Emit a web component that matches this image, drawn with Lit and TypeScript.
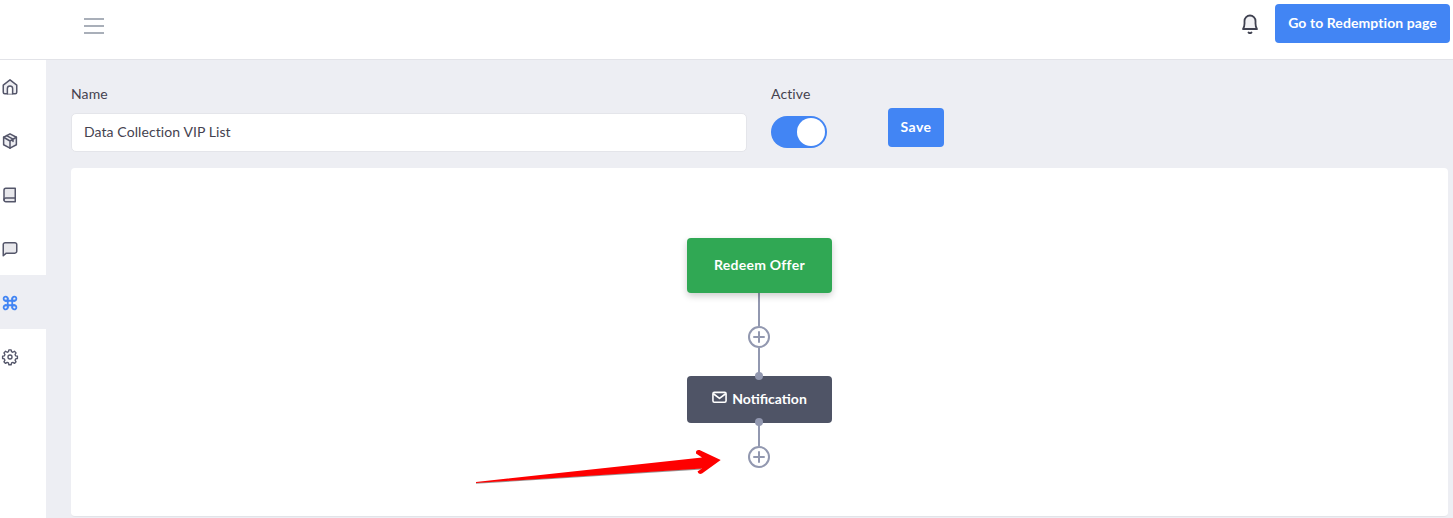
import { LitElement, html, css, svg } from "lit";
import { customElement } from "lit/decorators.js";

const navIcons = [
  svg`<path d="M12 2.500 21 9.500V19a2 2 0 0 1-2 2H5a2 2 0 0 1-2-2V9.500z" fill="#eeeef2"/><path d="M8.500 21v-7a3.500 3.500 0 0 1 7 0v7" fill="#fff"/>`,
  svg`<path d="M12 2.500 20.500 7v10L12 21.500 3.500 17V7z" fill="#eeeef2"/><path d="M3.500 7 12 12l8.500-5M12 12v9.500M7.500 4.800 16 9.500v3"/>`,
  svg`<path d="M6.500 3H19v18H6.500A2.500 2.500 0 0 1 4 18.500v-13A2.500 2.500 0 0 1 6.500 3z" fill="#e8e8ec"/><path d="M4 18.500A2.500 2.500 0 0 1 6.500 16H19"/>`,
  svg`<path d="M3 21V6a2.500 2.500 0 0 1 2.500-2.500h13A2.500 2.500 0 0 1 21 6v9a2.500 2.500 0 0 1-2.500 2.500H7z" fill="#e8e8ec"/>`,
  svg`<path d="M9 6v12M15 6v12M6 9h12M6 15h12" stroke-width="2.400"/><path stroke-width="2.400" d="M9 9H6.500A2.750 2.750 0 1 1 9 6.500M15 9V6.500A2.750 2.750 0 1 1 17.500 9M15 15h2.500A2.750 2.750 0 1 1 15 17.500M9 15v2.500A2.750 2.750 0 1 1 6.500 15" />`,
  svg`<g transform="translate(1.200 1.200) scale(.9)"><circle cx="12" cy="12" r="3"/><path d="M10.300 1.500h3.400l.6 2.700 1.900.8 2.400-1.500 2.400 2.400-1.500 2.400.8 1.900 2.700.6v3.400l-2.700.6-.8 1.900 1.500 2.400-2.400 2.400-2.400-1.500-1.900.8-.6 2.700h-3.400l-.6-2.700-1.900-.8-2.400 1.500-2.400-2.400 1.500-2.400-.8-1.900-2.700-.6v-3.400l2.700-.6.8-1.900-1.500-2.400 2.400-2.400 2.400 1.500 1.900-.8z"/></g>`,
];

@customElement("app-root")
export class AppRoot extends LitElement {
  static styles = css`
    :host {
      display: block;
      width: 1453px;
      height: 518px;
      overflow: hidden;
      position: relative;
      background: #edeef3;
      font-family: "Lato", "Noto Sans", sans-serif;
      color: #4a4a5a;
    }
    .top {
      height: 59px;
      background: #fff;
      border-bottom: 1px solid #e2e3e8;
      display: flex;
      align-items: flex-start;
      justify-content: space-between;
      box-sizing: content-box;
    }
    .burger {
      margin: 18px 0 0 84px;
      width: 20px;
      display: flex;
      flex-direction: column;
      gap: 5px;
    }
    .burger i {
      display: block;
      height: 2px;
      background: #a9afb9;
    }
    .top-right {
      display: flex;
      align-items: flex-start;
      margin-right: 3px;
    }
    .bell {
      width: 20px;
      height: 22px;
      margin: 13px 15px 0 0;
      fill: #f1f1f4;
      stroke: #3f4150;
      stroke-width: 1.800;
      stroke-linecap: round;
      stroke-linejoin: round;
    }
    .go {
      width: 175px;
      height: 39px;
      padding-bottom: 2px;
      box-sizing: border-box;
      margin-top: 4px;
      background: #4285f4;
      border-radius: 4px;
      color: #fff;
      font-size: 14px;
      letter-spacing: 0.08px;
      font-weight: 700;
      display: flex;
      align-items: center;
      justify-content: center;
    }
    .body {
      display: flex;
      height: 458px;
    }
    .side {
      width: 46px;
      background: #fff;
      flex: none;
    }
    .nav-list {
      margin-top: -1px;
    }
    .nav {
      height: 54px;
      width: 46px;
      display: flex;
      align-items: center;
      padding: 2px 0 0 1px;
      box-sizing: border-box;
    }
    .nav.on {
      background: #edeef3;
    }
    .nav svg {
      width: 18px;
      height: 18px;
      fill: none;
      stroke: #54566a;
      stroke-width: 2;
      stroke-linecap: round;
      stroke-linejoin: round;
    }
    .nav.on svg {
      stroke: #4285f4;
    }
    .main {
      flex: 1;
      padding: 0 5px 0 25px;
      min-width: 0;
    }
    .form {
      height: 108px;
      display: flex;
      align-items: flex-start;
    }
    .field-name {
      width: 676px;
      margin-right: 24px;
    }
    .label {
      font-size: 14px;
      line-height: 18px;
      margin-top: 25px;
      color: #44424f;
      letter-spacing: 0.1px;
    }
    .input {
      margin-top: 10px;
      height: 39px;
      box-sizing: border-box;
      border: 1px solid #e4e5ea;
      border-radius: 5px;
      background: #fff;
      padding: 0 0 2px 12px;
      display: flex;
      align-items: center;
      font-size: 14px;
      letter-spacing: 0.09px;
      color: #44424f;
    }
    .toggle {
      margin-top: 13px;
      width: 56px;
      height: 32px;
      border-radius: 16px;
      background: #4285f4;
      display: flex;
      align-items: center;
      justify-content: flex-end;
      padding-right: 2px;
      box-sizing: border-box;
    }
    .toggle i {
      display: block;
      width: 28px;
      height: 28px;
      border-radius: 50%;
      background: #fff;
    }
    .save {
      margin: 48px 0 0 61px;
      width: 56px;
      height: 39px;
      padding-bottom: 2px;
      box-sizing: border-box;
      background: #4285f4;
      border-radius: 4px;
      color: #fff;
      font-size: 14px;
      letter-spacing: 0.4px;
      font-weight: 700;
      display: flex;
      align-items: center;
      justify-content: center;
    }
    .canvas {
      height: 349px;
      box-sizing: border-box;
      background: #fff;
      border-bottom: 1px solid #e2e3e8;
      border-radius: 4px;
      display: flex;
      flex-direction: column;
      align-items: center;
      padding-top: 70px;
    }
    .node {
      width: 145px;
      flex: none;
      border-radius: 4px;
      color: #fff;
      font-size: 14px;
      font-weight: 700;
      display: flex;
      align-items: center;
      justify-content: center;
      gap: 5px;
      position: relative;
      padding-bottom: 2px;
      box-sizing: border-box;
    }
    .green {
      height: 55px;
      background: #30a854;
      letter-spacing: 0.25px;
      box-shadow: 0 3px 7px rgba(0, 0, 0, 0.2);
    }
    .dark {
      height: 47px;
      background: #4f5466;
    }
    .dark svg {
      width: 15px;
      height: 15px;
      fill: none;
      stroke: #fff;
      stroke-width: 1.700;
      stroke-linejoin: round;
      margin-top: -2px;
    }
    .line {
      width: 2px;
      flex: none;
      background: #9298b0;
      margin-right: 1px;
    }
    .l1 { height: 33px; }
    .l2 { height: 28px; }
    .l3 { height: 23px; }
    .dot {
      position: absolute;
      left: 68px;
      width: 8px;
      height: 8px;
      border-radius: 50%;
      background: #9298b0;
    }
    .dot.t { top: -4px; }
    .dot.b { bottom: -3px; }
    .plus {
      width: 22px;
      height: 22px;
      flex: none;
      margin-right: 1px;
      fill: #fff;
      stroke: #9298b0;
      stroke-width: 2;
      stroke-linecap: round;
    }
    .arrow {
      position: absolute;
      left: 470px;
      top: 445px;
      width: 260px;
      height: 45px;
    }
  `;

  private plus() {
    return html`<svg class="plus" viewBox="0 0 22 22">
      <circle cx="11" cy="11" r="10"></circle>
      <path d="M11 6v10M6 11h10" fill="none" stroke-width="2"></path>
    </svg>`;
  }

  render() {
    return html`
      <div class="top">
        <div class="burger"><i></i><i></i><i></i></div>
        <div class="top-right">
          <svg class="bell" viewBox="0 0 20 22">
            <path d="M3 16c1.200-1.500 1.500-3 1.500-5.500V8a5.500 5.500 0 0 1 11 0v2.500c0 2.500.3 4 1.500 5.500z"></path>
            <path d="M8.500 19.500c.8.700 2.200.7 3 0" fill="none"></path>
          </svg>
          <div class="go">Go to Redemption page</div>
        </div>
      </div>
      <div class="body">
        <div class="side">
          <div class="nav-list">
            ${navIcons.map(
              (p, i) => html`<div class="nav ${i === 4 ? "on" : ""}"><svg viewBox="0 0 24 24">${p}</svg></div>`
            )}
          </div>
        </div>
        <div class="main">
          <div class="form">
            <div class="field-name">
              <div class="label">Name</div>
              <div class="input">Data Collection VIP List</div>
            </div>
            <div>
              <div class="label">Active</div>
              <div class="toggle"><i></i></div>
            </div>
            <div class="save">Save</div>
          </div>
          <div class="canvas">
            <div class="node green">Redeem Offer</div>
            <div class="line l1"></div>
            ${this.plus()}
            <div class="line l2"></div>
            <div class="node dark">
              <span class="dot t"></span>
              <svg viewBox="0 0 16 16">
                <rect x="1" y="2.500" width="14" height="10.500" rx="1.500"></rect>
                <path d="M1.500 4 8 9l6.500-5"></path>
              </svg>
              Notification
              <span class="dot b"></span>
            </div>
            <div class="line l3"></div>
            ${this.plus()}
          </div>
        </div>
      </div>
      <svg class="arrow" viewBox="0 0 260 45">
        <path d="M6 38.800 232 24.500 231 23 6 37.500Z" fill="#6e6a6a" opacity="0.7"></path>
        <path d="M6 37 232 12.500 226 8.500Q225.500 4.500 229.500 5L250.700 15 232 28.500Q228.500 30 227.500 26.500L232 23.500 6 38Z" fill="#fe0000"></path>
      </svg>
    `;
  }
}
